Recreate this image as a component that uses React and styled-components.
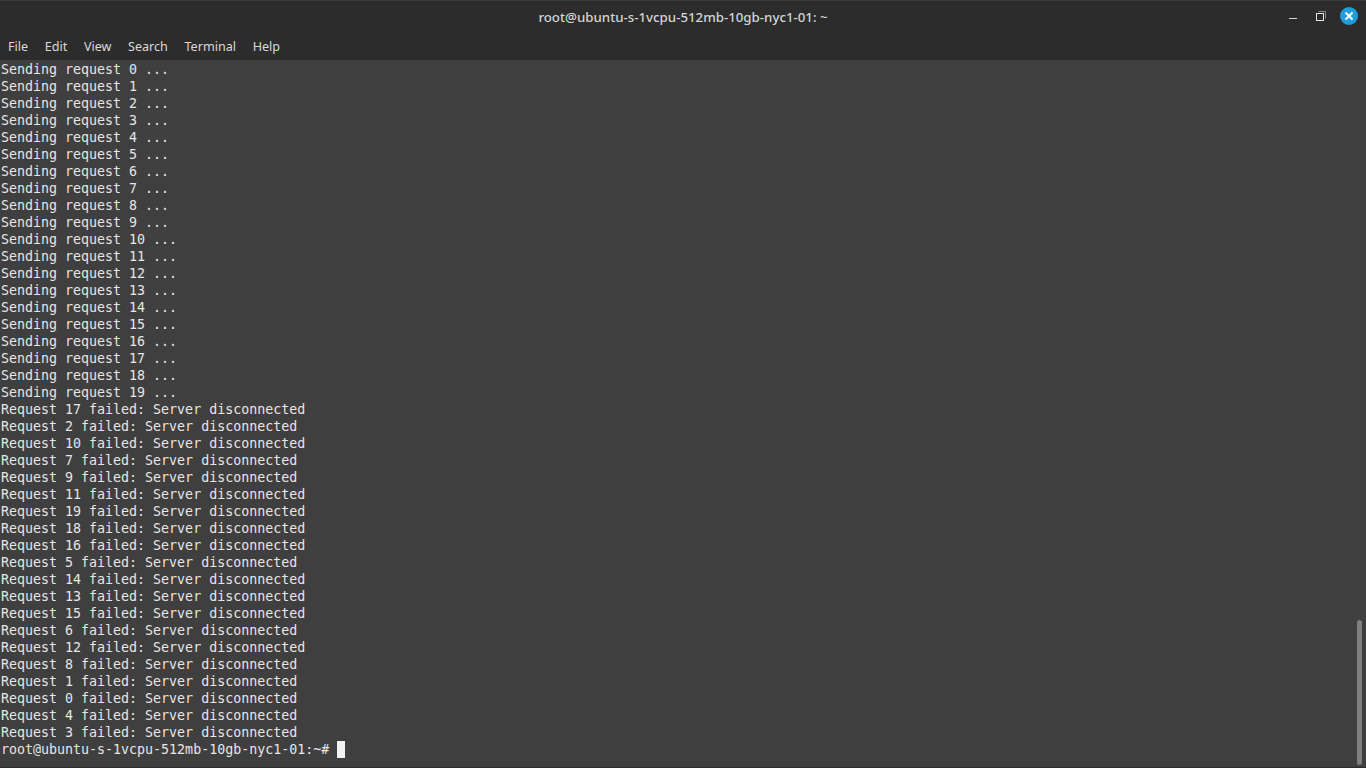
import React from "react";
import styled, { createGlobalStyle } from "styled-components";

const GlobalStyle = createGlobalStyle`
  html, body {
    margin: 0;
    padding: 0;
    height: 100%;
    overflow: hidden;
    background: #3f3f3f;
  }
`;

const failedOrder = [17, 2, 10, 7, 9, 11, 19, 18, 16, 5, 14, 13, 15, 6, 12, 8, 1, 0, 4, 3];
const menus = ["File", "Edit", "View", "Search", "Terminal", "Help"];

const Window = styled.div`
  display: flex;
  flex-direction: column;
  height: 100vh;
  background: #3f3f3f;
`;

const TitleBar = styled.header`
  position: relative;
  box-sizing: border-box;
  display: flex;
  align-items: center;
  justify-content: center;
  height: 36px;
  padding-bottom: 3px;
  background: #2c2c2c;
  border-top: 1px solid #3a3a3a;
`;

const Title = styled.h1`
  margin: 0;
  font: 500 13.27px "Noto Sans", "Open Sans", sans-serif;
  color: #d4d4d4;
`;

const Controls = styled.div`
  position: absolute;
  right: 8px;
  top: 6px;
  display: flex;
  align-items: center;
  gap: 10px;
`;

const ControlButton = styled.button`
  display: flex;
  align-items: center;
  justify-content: center;
  width: 18px;
  height: 18px;
  padding: 0;
  border: 0;
  background: none;
`;

const CloseButton = styled(ControlButton)`
  border-radius: 50%;
  background: #1f9ede;
`;

const MenuBar = styled.nav`
  box-sizing: border-box;
  display: flex;
  align-items: center;
  gap: 16.6px;
  height: 24px;
  padding: 0 8px 4px;
  background: #2c2c2c;
`;

const MenuItem = styled.span`
  font: 12.6px "Noto Sans", "Open Sans", sans-serif;
  color: #d9d9d9;
`;

const Terminal = styled.main`
  position: relative;
  flex: 1;
  padding-top: 1px;
  background: #3f3f3f;
  border-bottom: 1px solid #2c2c2c;
  overflow: hidden;
`;

const Line = styled.div`
  height: 17px;
  padding-left: 1px;
  font: 13.3px/17px "DejaVu Sans Mono", monospace;
  color: #e6e6e6;
  white-space: pre;
`;

const Cursor = styled.span`
  display: inline-block;
  width: 8px;
  height: 17px;
  vertical-align: top;
  background: #f2f2f2;
`;

const ScrollThumb = styled.div`
  position: absolute;
  right: 4px;
  bottom: 2px;
  width: 5px;
  height: 145px;
  border-radius: 3px;
  background: #7f7f7f;
`;

export default function App() {
  return (
    <Window>
      <GlobalStyle />
      <TitleBar>
        <Title>root@ubuntu-s-1vcpu-512mb-10gb-nyc1-01: ~</Title>
        <Controls>
          <ControlButton aria-label="Minimize">
            <svg width="10" height="10" viewBox="0 0 10 10">
              <rect x="1" y="7" width="8" height="1" fill="#d4d4d4" />
            </svg>
          </ControlButton>
          <ControlButton aria-label="Restore">
            <svg width="12" height="12" viewBox="0 0 12 12" fill="none">
              <path d="M3.5 1.5h7v7" stroke="#8a8a8a" />
              <rect x="1.5" y="3.5" width="7" height="7" stroke="#e4e4e4" />
            </svg>
          </ControlButton>
          <CloseButton aria-label="Close">
            <svg width="10" height="10" viewBox="0 0 10 10">
              <path d="M1.5 1.5l7 7M8.5 1.5l-7 7" stroke="#fff" strokeWidth="2" />
            </svg>
          </CloseButton>
        </Controls>
      </TitleBar>
      <MenuBar>
        {menus.map((m) => (
          <MenuItem key={m}>{m}</MenuItem>
        ))}
      </MenuBar>
      <Terminal>
        {Array.from({ length: 20 }, (_, i) => (
          <Line key={i}>{`Sending request ${i} ...`}</Line>
        ))}
        {failedOrder.map((n) => (
          <Line key={n}>{`Request ${n} failed: Server disconnected`}</Line>
        ))}
        <Line>
          {"root@ubuntu-s-1vcpu-512mb-10gb-nyc1-01:~# "}
          <Cursor />
        </Line>
        <ScrollThumb />
      </Terminal>
    </Window>
  );
}
